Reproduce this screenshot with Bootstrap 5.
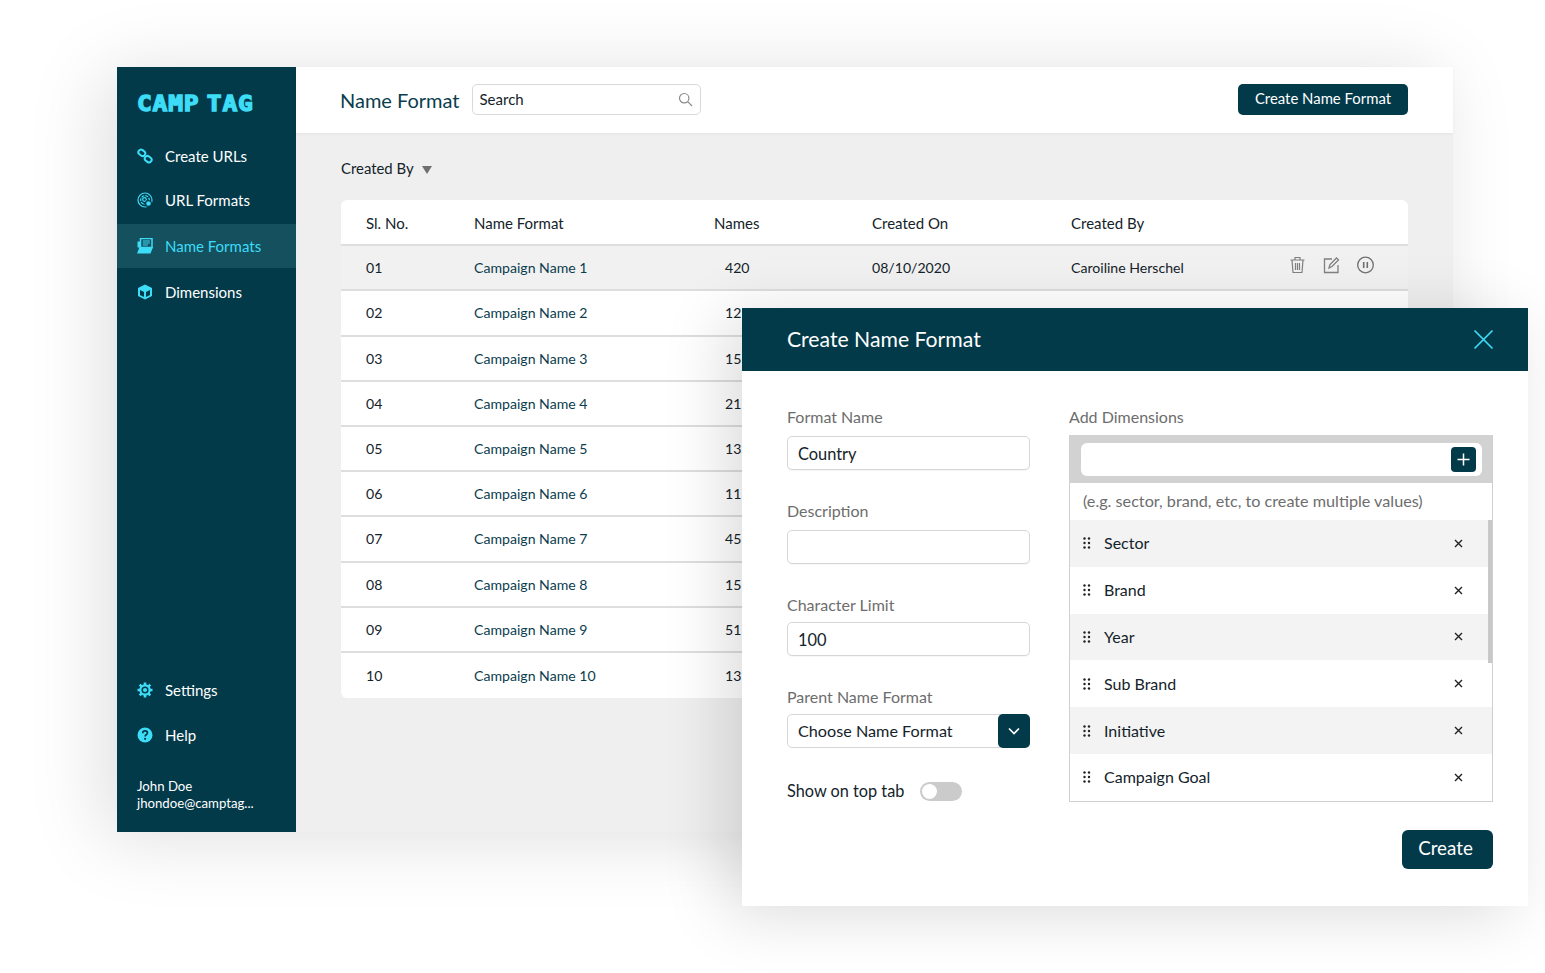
<!DOCTYPE html>
<html>
<head>
    <title>Camp Tag - Name Format</title>
    <meta name="viewport" content="width=device-width, initial-scale=1.0">
    <link href="https://cdn.jsdelivr.net/npm/bootstrap@5.3.0/dist/css/bootstrap.min.css" rel="stylesheet">
    <style>
        :root {
            --dark-teal: #023a4a;
            --cyan: #3ddcf7;
        }
        html, body {
            height: 973px;
            overflow: hidden;
        }
        body {
            background: #fff;
            font-family: Lato, "Liberation Sans", sans-serif;
            color: #14232a;
            position: relative;
        }
        .app-window {
            position: absolute;
            left: 117px;
            top: 67px;
            width: 1336px;
            height: 765px;
            background: #efefef;
            box-shadow: -14px 6px 70px rgba(0,0,0,0.13);
        }
        .side-nav {
            width: 179px;
            flex: none;
            background: var(--dark-teal);
            color: #fff;
        }
        .brand-wrap {
            padding: 26px 0 0 20px;
            height: 67px;
        }
        .brand-text {
            display: block;
            font-family: "DejaVu Sans Mono", monospace;
            font-weight: 700;
            font-size: 21px;
            line-height: 22px;
            letter-spacing: 0.7px;
            word-spacing: -7px;
            color: var(--cyan);
            -webkit-text-stroke: 1.3px var(--cyan);
            white-space: nowrap;
            transform: scaleX(1.17);
            transform-origin: left center;
        }
        .nav-row {
            height: 44px;
            padding-left: 20px;
            gap: 12px;
            font-size: 15px;
            color: #fff;
        }
        .nav-row svg {
            width: 16px;
            height: 16px;
            flex: none;
        }
        .nav-row.is-active {
            background: #15505e;
            color: var(--cyan);
            margin: 2px 0;
        }
        .nav-row.mt-auto {
            margin-bottom: 1px;
        }
        .user-block {
            padding: 21px 0 20px 20px;
            font-size: 13.2px;
            line-height: 17px;
        }
        .top-strip {
            height: 66px;
            background: #fff;
            padding: 0 45px 1px 44px;
            box-shadow: 0 1px 3px rgba(0,0,0,0.05);
        }
        .page-title {
            font-size: 20px;
            font-weight: 400;
            color: #0b3d4e;
            margin: 0 12px 0 0;
        }
        .search-box {
            width: 229px;
            height: 31px;
            border: 1px solid #d9d9d9;
            border-radius: 5px;
            padding: 0 7px;
            font-size: 15px;
        }
        .btn-teal {
            background: var(--dark-teal);
            color: #fff;
            border: 0;
            border-radius: 5px;
        }
        .btn-teal:hover {
            background: #0b4c5f;
            color: #fff;
        }
        .btn-create-top {
            width: 170px;
            height: 31px;
            font-size: 14.9px;
            padding: 0 0 2px;
        }
        .filter-line {
            padding: 4px 0 0 45px;
            height: 67px;
            font-size: 14.9px;
            gap: 8px;
            line-height: 37px;
        }
        .filter-arrow {
            width: 0;
            height: 0;
            border-left: 5px solid transparent;
            border-right: 5px solid transparent;
            border-top: 8px solid #6f6f6f;
            margin-top: 2px;
        }
        .table-sheet {
            margin: 0 45px 0 45px;
            width: 1067px;
            background: #fff;
            border-radius: 6px;
            overflow: hidden;
        }
        .name-table {
            table-layout: fixed;
            width: 100%;
            margin: 0;
            font-size: 14.1px;
            color: #14232a;
        }
        .name-table th, .name-table td {
            height: 45.2px;
            padding: 0;
            vertical-align: middle;
            border-bottom: 2px solid #dedede;
            background: transparent;
            box-shadow: none;
        }
        .name-table th {
            font-weight: 400;
            font-size: 15px;
            padding-top: 3px;
        }
        .name-table tbody tr:last-child td {
            border-bottom: 0;
            height: 46px;
        }
        .name-table tr.row-hover td {
            background: #f1f1f1;
        }
        .name-table .first-col {
            padding-left: 25px;
        }
        .name-table .name-link {
            color: #0b3d4e;
            text-decoration: none;
        }
        .names-num {
            padding-left: 11px;
        }
        .row-tools {
            gap: 17px;
            margin-top: -6px;
            margin-left: -1px;
        }
        .row-tools svg {
            width: 17px;
            height: 18px;
        }
        .format-dialog {
            position: absolute;
            left: 742px;
            top: 308px;
            width: 786px;
            height: 598px;
            background: #fff;
            box-shadow: -16px 8px 60px rgba(0,0,0,0.14);
        }
        .dialog-head {
            height: 63px;
            background: var(--dark-teal);
            color: #fff;
            padding: 0 34px 0 45px;
        }
        .dialog-head h2 {
            font-size: 21.2px;
            font-weight: 400;
            margin: 0;
        }
        .dialog-body {
            padding: 36px 35px 0 45px;
            gap: 39px;
        }
        .left-fields {
            width: 243px;
            flex: none;
        }
        .right-fields {
            width: 424px;
            flex: none;
        }
        .field-label {
            font-size: 16px;
            line-height: 20px;
            color: #6d6d6d;
            margin-bottom: 8px;
        }
        .left-fields .field-label {
            margin-bottom: 9px;
        }
        .left-fields .field-label.is-tight {
            margin-bottom: 7px;
        }
        .field-input {
            height: 34px;
            font-size: 16.4px;
            padding: 0 10px;
            border: 1px solid #d6d6d6;
            border-radius: 5px;
            color: #14232a;
            box-shadow: 0 1px 1px rgba(0,0,0,0.04);
        }
        .field-gap {
            margin-bottom: 31px;
        }
        .select-box {
            height: 34px;
            border: 1px solid #d6d6d6;
            border-radius: 5px;
            font-size: 16.2px;
            padding-left: 10px;
            position: relative;
        }
        .select-caret {
            width: 32px;
            height: 34px;
            margin: -1px -1px -1px 0;
            border-radius: 5px;
            background: var(--dark-teal);
        }
        .toggle-line {
            margin-top: 31px;
            font-size: 16.3px;
            gap: 16px;
        }
        .toggle-pill {
            width: 42px;
            height: 19px;
            border-radius: 10px;
            background: #cbcbcb;
            padding: 2px;
        }
        .toggle-pill span {
            display: block;
            width: 15px;
            height: 15px;
            border-radius: 50%;
            background: #fff;
        }
        .dim-box {
            height: 367px;
            border: 1px solid #d0d0d0;
            border-top: 0;
            position: relative;
            overflow: hidden;
        }
        .dim-entry {
            background: #d2d2d2;
            height: 48px;
            padding: 8px 10px 7px 11px;
        }
        .dim-entry-field {
            height: 33px;
            background: #fff;
            border-radius: 6px;
            padding-right: 6px;
        }
        .plus-btn {
            width: 25px;
            height: 25px;
            border-radius: 4px;
            background: var(--dark-teal);
        }
        .dim-hint {
            height: 37px;
            padding: 0 0 0 13px;
            font-size: 16.2px;
            color: #6d6d6d;
        }
        .dim-row {
            height: 46.8px;
            font-size: 16px;
            color: #14232a;
            padding: 0 29px 0 13px;
            gap: 13px;
        }
        .dim-row:nth-child(odd) {
            background: #f3f3f3;
        }
        .dim-scroll {
            position: absolute;
            right: 0;
            top: 85px;
            width: 4px;
            height: 143px;
            background: #c8c8c8;
        }
        .btn-create-big {
            display: block;
            margin: 28px 0 0 auto;
            width: 91px;
            height: 39px;
            font-size: 18.8px;
            padding: 0 4px 2px 0;
            border-radius: 6px;
        }
    </style>
</head>
<body>
    <div class="app-window d-flex">
        <aside class="side-nav d-flex flex-column">
            <div class="brand-wrap"><span class="brand-text">CAMP TAG</span></div>
            <a class="nav-row d-flex align-items-center text-decoration-none">
                <svg viewBox="0 0 16 16" fill="none" stroke="#3ddcf7" stroke-width="2"><rect x="-3.6" y="-2.6" width="7.2" height="5.2" rx="2.6" transform="translate(4.8 4.8) rotate(38)"/><rect x="-3.6" y="-2.6" width="7.2" height="5.2" rx="2.6" transform="translate(11.2 11.2) rotate(38)"/></svg>
                Create URLs
            </a>
            <a class="nav-row d-flex align-items-center text-decoration-none">
                <svg viewBox="0 0 16 16" fill="none" stroke="#3ddcf7" stroke-width="1.2"><circle cx="8" cy="8" r="7"/><circle cx="8" cy="8" r="4.300" stroke-dasharray="3 1"/><circle cx="7.500" cy="7.500" r="1.800"/><circle cx="11.500" cy="11.500" r="2.900" fill="#3ddcf7" stroke="#023a4a"/></svg>
                URL Formats
            </a>
            <a class="nav-row is-active d-flex align-items-center text-decoration-none">
                <svg viewBox="0 0 16 16"><path d="M3.500 0.500h11.500v9h-11.500z" fill="none" stroke="#3ddcf7" stroke-width="1.500"/><path d="M5.800 3h7M5.800 5h7M5.800 7h5" stroke="#3ddcf7" stroke-width="1"/><path d="M0.500 3.500h2.500v6h-2.500z" fill="#3ddcf7"/><path d="M2.500 9h13.500l-2.500 6.500h-13.500z" fill="#3ddcf7"/></svg>
                Name Formats
            </a>
            <a class="nav-row d-flex align-items-center text-decoration-none">
                <svg viewBox="0 0 16 16"><path d="M8 .4l7 3.600v8l-7 3.600-7-3.600V4z" fill="#3ddcf7"/><path d="M3 6l4 2v5l-4-2z" fill="#023a4a"/><path d="M13 6l-4 2v5l4-2z" fill="#023a4a"/></svg>
                Dimensions
            </a>
            <a class="nav-row d-flex align-items-center text-decoration-none mt-auto">
                <svg viewBox="0 0 16 16"><path d="M8 2.200a5.800 5.800 0 1 0 0 11.600 5.800 5.800 0 0 0 0-11.600z" fill="#3ddcf7"/><path d="M8 .5V4M8 12v3.500M.5 8H4M12 8h3.500M2.700 2.700l2.500 2.500M10.800 10.800l2.500 2.500M13.300 2.700l-2.500 2.500M5.200 10.800l-2.500 2.500" stroke="#3ddcf7" stroke-width="2.600"/><circle cx="8" cy="8" r="2.800" fill="none" stroke="#023a4a" stroke-width="1.500"/></svg>
                Settings
            </a>
            <a class="nav-row d-flex align-items-center text-decoration-none">
                <svg viewBox="0 0 16 16"><circle cx="8" cy="8" r="7.500" fill="#3ddcf7"/><path d="M5.700 6.200c0-1.500 1.100-2.300 2.400-2.300s2.300.8 2.300 2c0 1.900-2.300 1.800-2.300 3.500" fill="none" stroke="#023a4a" stroke-width="1.700"/><circle cx="8.100" cy="11.800" r="1.100" fill="#023a4a"/></svg>
                Help
            </a>
            <div class="user-block">John Doe<br>jhondoe@camptag...</div>
        </aside>

        <main class="flex-grow-1">
            <header class="top-strip d-flex align-items-center">
                <h1 class="page-title">Name Format</h1>
                <div class="search-box d-flex align-items-center justify-content-between">
                    <span>Search</span>
                    <svg width="15" height="15" viewBox="0 0 15 15" fill="none" stroke="#8a8a8a" stroke-width="1.200"><circle cx="6.200" cy="6.200" r="4.700"/><path d="M9.700 9.700l4.300 4.300"/></svg>
                </div>
                <button class="btn btn-teal btn-create-top ms-auto">Create Name Format</button>
            </header>

            <div class="filter-line d-flex align-items-center">
                <span>Created By</span>
                <span class="filter-arrow"></span>
            </div>

            <div class="table-sheet">
                <table class="name-table">
                    <colgroup>
                        <col style="width:133px"><col style="width:240px"><col style="width:158px"><col style="width:199px"><col style="width:219px"><col>
                    </colgroup>
                    <thead>
                        <tr>
                            <th class="first-col">Sl. No.</th>
                            <th>Name Format</th>
                            <th>Names</th>
                            <th>Created On</th>
                            <th>Created By</th>
                            <th></th>
                        </tr>
                    </thead>
                    <tbody id="nameRows"></tbody>
                </table>
            </div>
        </main>
    </div>

    <section class="format-dialog">
        <div class="dialog-head d-flex align-items-center justify-content-between">
            <h2>Create Name Format</h2>
            <svg width="21" height="21" viewBox="0 0 21 21" stroke="#3ddcf7" stroke-width="1.700"><path d="M1.500 1.500l18 18M19.500 1.500l-18 18"/></svg>
        </div>
        <div class="dialog-body d-flex">
            <div class="left-fields">
                <div class="field-label">Format Name</div>
                <input class="form-control field-input field-gap" value="Country">
                <div class="field-label">Description</div>
                <input class="form-control field-input field-gap">
                <div class="field-label is-tight">Character Limit</div>
                <input class="form-control field-input field-gap" value="100">
                <div class="field-label is-tight">Parent Name Format</div>
                <div class="select-box d-flex align-items-center justify-content-between">
                    <span>Choose Name Format</span>
                    <span class="select-caret d-flex align-items-center justify-content-center">
                        <svg width="12" height="8" viewBox="0 0 12 8" fill="none" stroke="#fff" stroke-width="1.600"><path d="M1 1.500l5 5 5-5"/></svg>
                    </span>
                </div>
                <div class="toggle-line d-flex align-items-center">
                    <span>Show on top tab</span>
                    <span class="toggle-pill"><span></span></span>
                </div>
            </div>
            <div class="right-fields">
                <div class="field-label">Add Dimensions</div>
                <div class="dim-box">
                    <div class="dim-entry">
                        <div class="dim-entry-field d-flex align-items-center justify-content-end">
                            <span class="plus-btn d-flex align-items-center justify-content-center">
                                <svg width="13" height="13" viewBox="0 0 13 13" stroke="#fff" stroke-width="1.500"><path d="M6.500 0.500v12M0.500 6.500h12"/></svg>
                            </span>
                        </div>
                    </div>
                    <div class="dim-hint d-flex align-items-center">(e.g. sector, brand, etc, to create multiple values)</div>
                    <div id="dimRows"></div>
                    <div class="dim-scroll"></div>
                </div>
                <button class="btn btn-teal btn-create-big">Create</button>
            </div>
        </div>
    </section>

    <script src="https://cdn.jsdelivr.net/npm/bootstrap@5.3.0/dist/js/bootstrap.bundle.min.js"></script>
    <script>
        // the dialog cuts the Names column off after two digits
        const names = [420, 12, 15, 21, 13, 11, 45, 15, 51, 13];
        const tools = `
            <div class="row-tools d-flex">
                <svg viewBox="0 0 17 18" fill="none" stroke="#808080" stroke-width="1.200"><path d="M1.500 4h14M6 4V1.500h5V4M3 4l1 12.500h9L14 4M6.500 7v7M8.500 7v7M10.500 7v7"/></svg>
                <svg viewBox="0 0 17 18" fill="none" stroke="#808080" stroke-width="1.300"><path d="M9 3H1.500v13.500H15V9"/><path d="M6 12l1-3.500L13.500 2l2 2L9 10.500z"/></svg>
                <svg viewBox="0 0 17 18" fill="none" stroke="#707070" stroke-width="1.300"><circle cx="8.500" cy="9" r="7.800"/><path d="M6.700 6v6M10.300 6v6" stroke-width="1.600"/></svg>
            </div>`;

        // only the first row sticks out from under the dialog
        document.getElementById('nameRows').innerHTML = names.map((n, i) => {
            const num = String(i + 1).padStart(2, '0');
            return `
                <tr class="${i === 0 ? 'row-hover' : ''}">
                    <td class="first-col">${num}</td>
                    <td><a class="name-link" href="#">Campaign Name ${i + 1}</a></td>
                    <td><span class="names-num">${n}</span></td>
                    <td>${i === 0 ? '08/10/2020' : ''}</td>
                    <td>${i === 0 ? 'Caroiline Herschel' : ''}</td>
                    <td>${i === 0 ? tools : ''}</td>
                </tr>`;
        }).join('');

        const dims = ['Sector', 'Brand', 'Year', 'Sub Brand', 'Initiative', 'Campaign Goal'];
        document.getElementById('dimRows').innerHTML = dims.map(d => `
            <div class="dim-row d-flex align-items-center">
                <svg width="8" height="12" viewBox="0 0 8 12" fill="#222"><circle cx="1.500" cy="1.500" r="1.200"/><circle cx="6" cy="1.500" r="1.200"/><circle cx="1.500" cy="6" r="1.200"/><circle cx="6" cy="6" r="1.200"/><circle cx="1.500" cy="10.500" r="1.200"/><circle cx="6" cy="10.500" r="1.200"/></svg>
                <span class="flex-grow-1">${d}</span>
                <svg width="9" height="9" viewBox="0 0 9 9" stroke="#222" stroke-width="1.400"><path d="M1 1l7 7M8 1l-7 7"/></svg>
            </div>`).join('');
    </script>
</body>
</html>
